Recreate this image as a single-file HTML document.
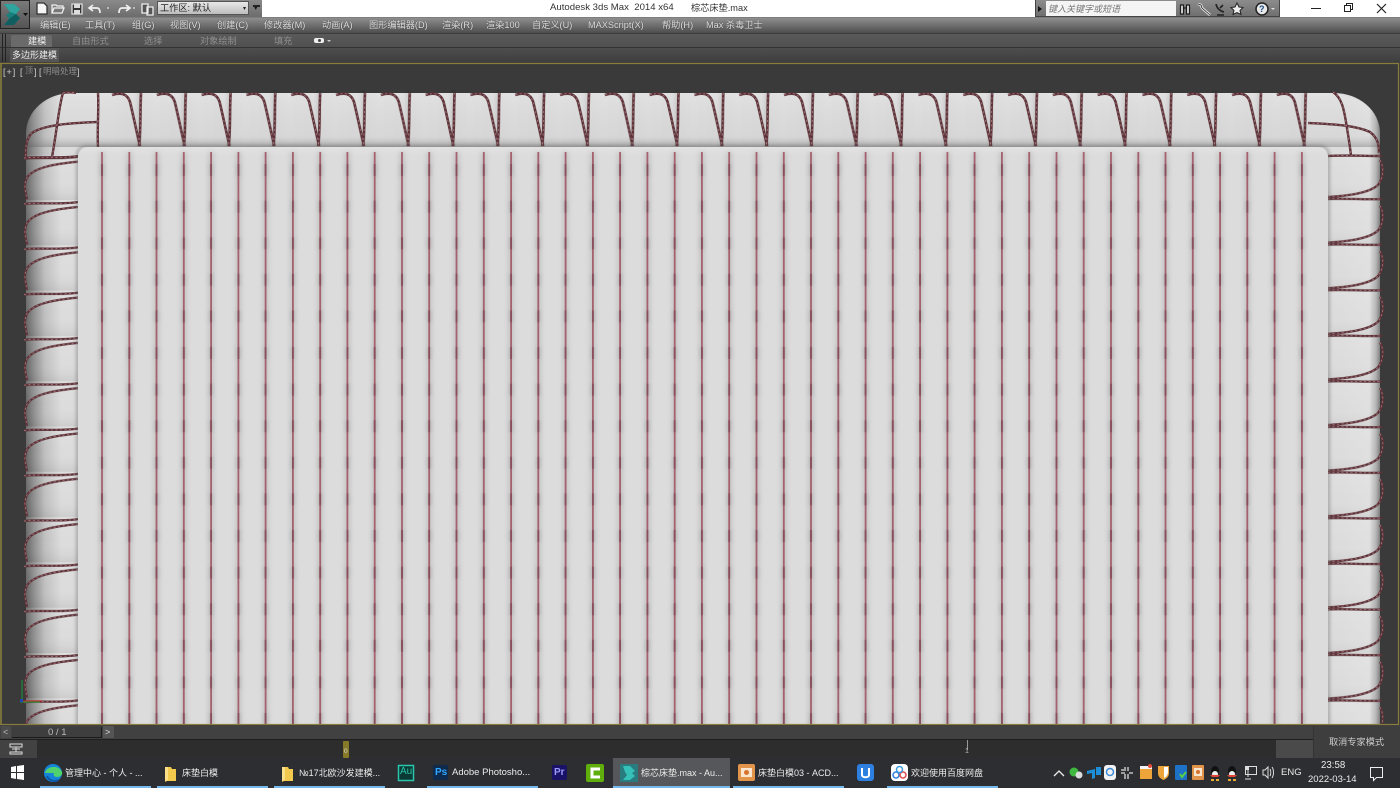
<!DOCTYPE html>
<html><head><meta charset="utf-8"><title>3ds Max</title>
<style>
html,body{margin:0;padding:0;background:#3a3a3a}
#p{position:relative;width:1400px;height:788px;overflow:hidden;background:#3a3a3a;font-family:"Liberation Sans","Noto Sans CJK SC",sans-serif;font-size:10px}
.a{position:absolute}
.t{position:absolute;white-space:pre;line-height:14px}
.m{color:#dedede;top:18px;font-size:9.2px;text-shadow:0 0 1px #333}
.r{color:#8f8f8f;top:34px;font-size:9.2px}
.k{color:#ececec;top:766px;font-size:9px}
.u{position:absolute;top:786px;height:2px;background:#76b9ed}
svg{position:absolute;overflow:visible}
</style></head><body><div id="p">

<!-- title bar -->
<div class="a" style="left:0;top:0;width:1400px;height:18px;background:#fff"></div>
<div class="a" style="left:30px;top:0;width:232px;height:17px;background:linear-gradient(#8a8a8a,#6c6c6c);border-bottom:1px solid #444"></div>
<div class="a" style="left:157px;top:1px;width:92px;height:14px;background:linear-gradient(#e8e8e8,#bdbdbd);border:1px solid #555;box-sizing:border-box"></div>
<span class="t" style="left:160px;top:1px;color:#222;font-size:9.2px">工作区: 默认</span>
<span class="t" style="left:243px;top:2px;color:#222;font-size:6px">▾</span>
<span class="t" style="left:254px;top:2px;color:#111;font-size:7px">▾</span>
<div class="a" style="left:253px;top:5px;width:7px;height:2px;background:#222"></div>
<span class="t" style="left:550px;top:1px;color:#333;font-size:9.6px">Autodesk 3ds Max  2014 x64</span>
<span class="t" style="left:691px;top:1px;color:#333;font-size:9.2px">棕芯床垫.max</span>

<!-- quick access icons -->
<svg style="left:30px;top:0" width="125" height="17" fill="none" stroke="#eee" stroke-width="1.300">
<path d="M7 3h7l3 3v8H7z" fill="#f5f5f5" stroke="#333"/>
<path d="M22 13V5h4l1 1h6v2M22 13l2-5h10l-2 5z" stroke="#eee"/>
<path d="M42 4h10v10H42z" fill="#333" stroke="#ddd"/><path d="M44 4h6v4h-6zM44 10h6v4h-6z" fill="#ddd" stroke="none"/>
<path d="M63 5l-4 3 4 3M59 8h8c2 0 3 2 3 5" stroke-width="1.700"/>
<path d="M77 8h2" stroke="#ddd"/>
<path d="M96 5l4 3-4 3M100 8h-8c-2 0-3 2-3 5" stroke-width="1.700"/>
<path d="M103 8h2" stroke="#ddd"/>
<path d="M112 4h6v9h-6zM117 7h6v8h-6z" stroke="#eee" fill="#555"/>
</svg>
<!-- search -->
<div class="a" style="left:1035px;top:0;width:245px;height:17px;background:linear-gradient(#8c8c8c,#707070);border:1px solid #444;border-top:0;box-sizing:border-box"></div>
<div class="a" style="left:1046px;top:1px;width:130px;height:15px;background:#f4f4f4"></div>
<span class="t" style="left:1048px;top:2px;color:#777;font-size:9px;font-style:italic">键入关键字或短语</span>
<svg style="left:1035px;top:0" width="245" height="17" fill="none" stroke="#1d1d1d" stroke-width="1.500">
<path d="M3 6l4 3-4 3z" fill="#111" stroke="none"/>
<path d="M145.500 5h3v9h-3zM151.500 5h3v9h-3zM148.500 8h3" fill="#ddd" stroke-width="1.200"/>
<path d="M163 4l3 1 1 3 8 7" stroke="#eee" stroke-width="2.500"/><path d="M163 4l3 1 1 3 8 7" stroke-width=".8"/>
<path d="M181 4c1 5 4 7 8 8M185 8l3-3M182 15h7" stroke="#222" stroke-width="1.600"/>
<path d="M202 3l2 4 4 .5-3 3 1 4-4-2-4 2 1-4-3-3 4-.5z" fill="#eee" stroke="#222" stroke-width="1"/>
<circle cx="227" cy="9" r="6" fill="#e8e8e8" stroke="#222"/>
<path d="M236 8h4l-2 2z" fill="#ddd" stroke="none"/>
</svg>
<span class="t" style="left:1259px;top:2px;color:#1b4d86;font-size:9px;font-weight:bold">?</span>
<!-- window controls -->
<svg style="left:1300px;top:0" width="100" height="18" fill="none" stroke="#222" stroke-width="1">
<path d="M11 8.500h10"/>
<path d="M44.500 5.500h6v6h-6zM46.500 5.500v-2h6v6h-2"/>
<path d="M77 4l9 9M86 4l-9 9" stroke-width="1.200"/>
</svg>

<!-- menu bar -->
<div class="a" style="left:0;top:18px;width:1400px;height:15px;background:linear-gradient(#8e8e8e,#4e4e4e)"></div>
<div class="a" style="left:0;top:17px;width:1400px;height:1px;background:#7d7d7d"></div>
<span class="t m" style="left:40px">编辑(E)</span>
<span class="t m" style="left:85px">工具(T)</span>
<span class="t m" style="left:132px">组(G)</span>
<span class="t m" style="left:170px">视图(V)</span>
<span class="t m" style="left:217px">创建(C)</span>
<span class="t m" style="left:264px">修改器(M)</span>
<span class="t m" style="left:322px">动画(A)</span>
<span class="t m" style="left:369px">图形编辑器(D)</span>
<span class="t m" style="left:442px">渲染(R)</span>
<span class="t m" style="left:486px">渲染100</span>
<span class="t m" style="left:532px">自定义(U)</span>
<span class="t m" style="left:588px">MAXScript(X)</span>
<span class="t m" style="left:662px">帮助(H)</span>
<span class="t m" style="left:706px">Max 杀毒卫士</span>

<!-- logo -->
<div class="a" style="left:0;top:0;width:30px;height:29px;background:linear-gradient(#7a7a7a,#555);border:1px solid #222;box-sizing:border-box"></div>
<svg style="left:0;top:0" width="30" height="29">
<path d="M4 4H14L20 9 16 14 20 18 14 25H4L9 19 6 15 10 12Z" fill="#1a7f7c"/>
<path d="M4 4H14L20 9 16 14 10 12Z" fill="#2fa39d"/>
<path d="M4 25H14L20 18 16 14 9 19Z" fill="#105e5f"/>
<path d="M23 13h5l-2.500 3z" fill="#111"/>
</svg>

<!-- ribbon -->
<div class="a" style="left:0;top:33px;width:1400px;height:14px;background:linear-gradient(#5a5a5a,#505050);border-top:1px solid #3c3c3c;box-sizing:border-box"></div>
<div class="a" style="left:0;top:47px;width:1400px;height:16px;background:linear-gradient(#4e4e4e,#3d3d3d);border-top:1px solid #333;box-sizing:border-box"></div>
<div class="a" style="left:2px;top:34px;width:4px;height:28px;border-left:1px solid #222;border-right:1px solid #222;box-sizing:border-box"></div>
<div class="a" style="left:11px;top:35px;width:41px;height:12px;background:#6a6a6a;border-radius:2px 2px 0 0"></div>
<span class="t" style="left:28px;top:34px;color:#eee;font-size:9.2px">建模</span>
<span class="t r" style="left:72px">自由形式</span>
<span class="t r" style="left:144px">选择</span>
<span class="t r" style="left:200px">对象绘制</span>
<span class="t r" style="left:274px">填充</span>
<div class="a" style="left:314px;top:38px;width:10px;height:5px;background:#eee;border-radius:2px"></div>
<div class="a" style="left:318px;top:39px;width:3px;height:3px;background:#444;border-radius:50%"></div>
<div class="a" style="left:327px;top:40px;width:0;height:0;border:2px solid transparent;border-top-color:#ccc"></div>
<div class="a" style="left:10px;top:48px;width:49px;height:14px;background:#555"></div>
<span class="t" style="left:12px;top:48px;color:#eee;font-size:9px">多边形建模</span>

<!-- viewport -->
<svg style="left:0;top:0" width="1400" height="788" viewBox="0 0 1400 788">
<defs>
<clipPath id="vp"><rect x="0" y="64" width="1400" height="660"/></clipPath>
<linearGradient id="outer" x1="26" x2="1380" y1="0" y2="0" gradientUnits="userSpaceOnUse">
<stop offset="0" stop-color="#666"/><stop offset=".006" stop-color="#909090"/><stop offset=".014" stop-color="#c0c0c0"/><stop offset=".026" stop-color="#dcdcdc"/><stop offset=".97" stop-color="#dcdcdc"/><stop offset=".992" stop-color="#e0e0e0"/><stop offset=".997" stop-color="#b4b4b4"/><stop offset="1" stop-color="#7e7e7e"/>
</linearGradient>
<linearGradient id="topv" x1="0" x2="0" y1="93" y2="147" gradientUnits="userSpaceOnUse">
<stop offset="0" stop-color="#fff" stop-opacity=".2"/><stop offset=".12" stop-color="#fff" stop-opacity=".1"/><stop offset=".8" stop-color="#999" stop-opacity=".06"/><stop offset="1" stop-color="#555" stop-opacity=".35"/>
</linearGradient>
<linearGradient id="tp" x1="0" x2="1" y1="0" y2="0">
<stop offset="0" stop-color="#000" stop-opacity="0"/><stop offset=".55" stop-color="#000" stop-opacity=".01"/><stop offset=".68" stop-color="#000" stop-opacity=".1"/><stop offset=".72" stop-color="#000" stop-opacity=".01"/><stop offset="1" stop-color="#000" stop-opacity="0"/>
</linearGradient>
<linearGradient id="sd" x1="0" x2="0" y1="0" y2="1">
<stop offset="0" stop-color="#fff" stop-opacity=".08"/><stop offset=".5" stop-color="#fff" stop-opacity="0"/><stop offset="1" stop-color="#000" stop-opacity=".07"/>
</linearGradient>
<linearGradient id="panelTop" x1="0" x2="0" y1="147" y2="156" gradientUnits="userSpaceOnUse">
<stop offset="0" stop-color="#e8e8e8" stop-opacity=".5"/><stop offset="1" stop-color="#e8e8e8" stop-opacity="0"/>
</linearGradient>
<pattern id="tb" patternUnits="userSpaceOnUse" x="110" y="90" width="44.8" height="58">
<rect width="44.8" height="58" fill="url(#tp)"/>
<g fill="none">
<path d="M2 5C10 2.500 17 3 20 12 23 24 27 44 30 56" stroke="#5c3238" stroke-width="2.600"/>
<path d="M31 3C30 20 31 40 29 56" stroke="#5c3238" stroke-width="2.600"/>
<path d="M2 5C10 2.500 17 3 20 12 23 24 27 44 30 56" stroke="#a87c82" stroke-width=".8" stroke-dasharray="2 2.500"/>
<path d="M31 3C30 20 31 40 29 56" stroke="#a87c82" stroke-width=".8" stroke-dasharray="2 2.500"/>
</g>
</pattern>
<pattern id="lf" patternUnits="userSpaceOnUse" x="20" y="154.700" width="60" height="45.300">
<rect x="6" y="0" width="52" height="45.300" fill="url(#sd)"/>
<g fill="none">
<path d="M4 4C20 2 40 5 58 2" stroke="#5c3238" stroke-width="2.300"/>
<path d="M58 7C38 9 14 12 7 23 3 31 6 38 7 45" stroke="#5c3238" stroke-width="2.200"/>
<path d="M4 4C20 2 40 5 58 2" stroke="#a87c82" stroke-width=".8" stroke-dasharray="2 2.500"/>
<path d="M58 7C38 9 14 12 7 23 3 31 6 38 7 45" stroke="#a87c82" stroke-width=".8" stroke-dasharray="2 2.500"/>
</g>
</pattern>
<pattern id="rt" patternUnits="userSpaceOnUse" x="1326" y="155" width="60" height="45.600">
<rect x="2" y="0" width="52" height="45.600" fill="url(#sd)"/>
<g fill="none">
<path d="M54 5C58 12 58 22 52 30 42 39 18 41 2 42" stroke="#5c3238" stroke-width="2.300"/>
<path d="M2 44C20 43 38 45 56 44" stroke="#5c3238" stroke-width="2.200"/>
<path d="M54 5C58 12 58 22 52 30 42 39 18 41 2 42" stroke="#a87c82" stroke-width=".8" stroke-dasharray="2 2.500"/>
<path d="M2 44C20 43 38 45 56 44" stroke="#a87c82" stroke-width=".8" stroke-dasharray="2 2.500"/>
</g>
</pattern>
<filter id="bl"><feGaussianBlur stdDeviation="1.800"/></filter>
<filter id="bl2"><feGaussianBlur stdDeviation="2.500"/></filter>
<path id="vlines" fill="none" d="M102 152V726M129.300 152V726M156.500 152V726M183.800 152V726M211.100 152V726M238.400 152V726M265.600 152V726M292.900 152V726M320.200 152V726M347.400 152V726M374.700 152V726M402 152V726M429.200 152V726M456.500 152V726M483.800 152V726M511.100 152V726M538.300 152V726M565.600 152V726M592.900 152V726M620.100 152V726M647.400 152V726M674.700 152V726M701.900 152V726M729.200 152V726M756.500 152V726M783.800 152V726M811 152V726M838.300 152V726M865.600 152V726M892.800 152V726M920.100 152V726M947.400 152V726M974.600 152V726M1001.900 152V726M1029.200 152V726M1056.500 152V726M1083.700 152V726M1111 152V726M1138.300 152V726M1165.500 152V726M1192.800 152V726M1220.100 152V726M1247.300 152V726M1274.600 152V726M1301.900 152V726"/>
<g id="ropes" fill="none">
<path d="M98 93C99 110 97 130 98 147"/>
<path d="M63 93C59 105 57 130 52 157"/>
<path d="M63 93C68 92 72 92 76 93"/>
<path d="M98 122C75 123 45 124 32 133 26 138 25 150 26 158"/>
<path d="M1308 123C1330 124 1355 125 1370 132 1378 138 1379 145 1379 153"/>
<path d="M1333 92C1342 98 1344 110 1346 122 1348 135 1350 145 1351 156"/>
<path d="M1328 156C1345 155 1365 156 1382 156"/>
<path d="M24 158C40 156 60 159 78 156"/>
</g>
</defs>
<g clip-path="url(#vp)">
<rect x="0" y="64" width="1400" height="660" fill="#3a3a3a"/>
<rect x="26" y="93" width="1354" height="720" rx="46" ry="40" fill="url(#outer)"/>
<path d="M26 147V135Q30 100 72 93H1334Q1376 100 1380 135V147Z" fill="url(#topv)"/>
<rect x="110" y="90" width="1200" height="58" fill="url(#tb)"/>
<rect x="20" y="154.700" width="60" height="570" fill="url(#lf)"/>
<rect x="1326" y="155" width="60" height="570" fill="url(#rt)"/>
<use href="#ropes" stroke="#5c3238" stroke-width="2.400"/>
<use href="#ropes" stroke="#a87c82" stroke-width=".8" stroke-dasharray="2 2.500"/>
<rect x="76" y="145" width="1254" height="590" rx="10" fill="#5e5e5e" opacity=".4" filter="url(#bl)"/>
<rect x="78" y="147" width="1250" height="590" rx="10" fill="#dcdcdc"/>
<rect x="78" y="147" width="1250" height="12" rx="7" fill="url(#panelTop)"/>
<use href="#vlines" stroke="#adadad" stroke-width="6" opacity=".5" filter="url(#bl2)"/>
<use href="#vlines" stroke="#808080" stroke-width="5" opacity=".2" stroke-dasharray="12 24.600" stroke-dashoffset="-12" filter="url(#bl)"/>
<use href="#vlines" stroke="#a5616f" stroke-width="1.800"/>
<use href="#vlines" stroke="#8a4f5c" stroke-width="1.800" stroke-dasharray="12 24.600" stroke-dashoffset="-12"/>
<path d="M20 702H40M22 680V702" stroke="#1a9a3a" stroke-width="1" fill="none"/>
<path d="M20 701H42" stroke="#cc2222" stroke-width="1"/>
<rect x="20" y="699" width="3" height="3" fill="#2244bb"/>
</g>
<rect x="0.500" y="63.500" width="1398" height="661" fill="none" stroke="#8a7d3a" stroke-width="1.200"/>
<rect x="0" y="64" width="2" height="660" fill="#77703a"/>
</svg>
<span class="t" style="left:3px;top:65px;color:#cfcfcf;font-size:9px;letter-spacing:1px">[+]</span>
<span class="t" style="left:20px;top:65px;color:#cfcfcf;font-size:9px">[</span>
<span class="t" style="left:25px;top:64px;color:#8a8a8a;font-size:8px">顶</span>
<span class="t" style="left:34px;top:65px;color:#cfcfcf;font-size:9px">]</span>
<span class="t" style="left:39px;top:65px;color:#cfcfcf;font-size:9px">[</span>
<span class="t" style="left:43px;top:64px;color:#8a8a8a;font-size:8.500px">明暗处理</span>
<span class="t" style="left:77px;top:65px;color:#cfcfcf;font-size:9px">]</span>

<!-- time slider -->
<div class="a" style="left:0;top:725px;width:1400px;height:15px;background:#414141;border-bottom:1px solid #1f1f1f;box-sizing:border-box"></div>
<div class="a" style="left:1px;top:726px;width:10px;height:12px;background:#4c4c4c"></div>
<div class="a" style="left:12px;top:727px;width:90px;height:11px;background:#3e3e3e;border-bottom:1px solid #1a1a1a;border-right:1px solid #1a1a1a;box-sizing:border-box"></div>
<div class="a" style="left:103px;top:726px;width:11px;height:12px;background:#555"></div>
<span class="t" style="left:3px;top:725px;color:#bbb;font-size:9px">&lt;</span>
<span class="t" style="left:105px;top:725px;color:#ddd;font-size:9px">&gt;</span>
<span class="t" style="left:48px;top:726px;color:#bbb;font-size:9.500px">0 / 1</span>

<!-- track bar -->
<div class="a" style="left:0;top:740px;width:1400px;height:18px;background:#2d2d2d"></div>
<div class="a" style="left:0;top:740px;width:37px;height:18px;background:#424242"></div>
<div class="a" style="left:1276px;top:740px;width:37px;height:18px;background:#4a4a4a"></div>
<svg style="left:0;top:740px" width="37" height="18" fill="none" stroke="#ddd" stroke-width="1">
<path d="M10 4h12v3H10zM12 9h8M16 7v5M10 12h12v2H10z"/>
</svg>
<div class="a" style="left:343px;top:741px;width:6px;height:17px;background:#867a28;border-radius:1px"></div>
<span class="t" style="left:344px;top:747px;color:#ddd;font-size:6.500px;line-height:10px">0</span>
<div class="a" style="left:967px;top:740px;width:1px;height:10px;background:#999"></div>
<span class="t" style="left:965px;top:747px;color:#bbb;font-size:7px;line-height:10px">1</span>
<div class="a" style="left:1313px;top:726px;width:87px;height:33px;background:#3e3e3e;border-left:1px solid #333;box-sizing:border-box"></div>
<span class="t" style="left:1329px;top:735px;color:#ccc;font-size:9.200px">取消专家模式</span>

<!-- taskbar -->
<div class="a" style="left:0;top:758px;width:1400px;height:30px;background:#2c2e32"></div>
<div class="a" style="left:613px;top:758px;width:117px;height:30px;background:#55575a"></div>
<div class="u" style="left:40px;width:111px"></div>
<div class="u" style="left:157px;width:111px"></div>
<div class="u" style="left:274px;width:111px"></div>
<div class="u" style="left:427px;width:111px"></div>
<div class="u" style="left:613px;width:117px"></div>
<div class="u" style="left:733px;width:111px"></div>
<div class="u" style="left:887px;width:111px"></div>

<svg style="left:0;top:758px" width="1400" height="30">
<path d="M11 9l5-1v6h-5zM17 8l7-1v7h-7zM11 15h5v6l-5-1zM17 15h7v7l-7-1z" fill="#fff"/>
<circle cx="53" cy="15" r="9" fill="#1683d8"/><path d="M45 15c1-7 14-9 17-1 1 3-2 5-5 5-3 0-4-2-3-4-3 0-6 0-9 0z" fill="#4fd26e"/><path d="M47 18c2 5 8 6 11 4" stroke="#0c5aa8" stroke-width="2" fill="none"/>
<path d="M165 9h6l1 2 4 0v12h-9l-2 1z" fill="#f2c94c"/><path d="M165 9v14l3-1V9z" fill="#fbe08a"/>
<path d="M282 9h6l1 2 4 0v12h-9l-2 1z" fill="#f2c94c"/><path d="M282 9v14l3-1V9z" fill="#fbe08a"/>
<rect x="398.500" y="7.500" width="15" height="15" fill="#0a3a33" stroke="#2bc5ad" stroke-width="1.500"/>
<rect x="433" y="7" width="15" height="15" rx="2" fill="#0e2a4d"/>
<rect x="552" y="7" width="15" height="15" rx="2" fill="#1a1266"/>
<rect x="586" y="6" width="18" height="18" rx="2" fill="#5fae0c"/><path d="M600 11h-8v8h8" stroke="#fff" stroke-width="3" fill="none"/>
<rect x="620" y="6" width="18" height="18" fill="#2a7b80"/><path d="M623 8h7l5 5-3 2 3 3-5 4h-7l4-5-2-3z" fill="#35c1b8"/>
<rect x="738" y="6" width="17" height="17" rx="2" fill="#e2944b"/><rect x="741" y="10" width="11" height="9" fill="#f8e6d0"/><circle cx="746.500" cy="14.500" r="2.500" fill="#d9722a"/>
<rect x="857" y="6" width="17" height="17" rx="3" fill="#2d7fe0"/><path d="M862 10v7c0 3 7 3 7 0v-7" stroke="#fff" stroke-width="2" fill="none"/>
<rect x="891" y="6" width="17" height="17" rx="4" fill="#fff"/><circle cx="896" cy="17" r="3" fill="none" stroke="#2d7fe0" stroke-width="1.500"/><circle cx="903" cy="17" r="3" fill="none" stroke="#e04a4a" stroke-width="1.500"/><circle cx="899.500" cy="11.500" r="3" fill="none" stroke="#3b9be0" stroke-width="1.500"/>
<path d="M1054 18l5-5 5 5" stroke="#eee" stroke-width="1.300" fill="none"/>
<circle cx="1074" cy="14" r="4.500" fill="#3fb83f"/><circle cx="1079" cy="17" r="3.500" fill="#ddd"/>
<path d="M1087 13l8-2 0 9-3 1v-6l-5 1zM1096 9h5v8h-5z" fill="#1d8fd8"/>
<rect x="1104" y="7" width="12" height="15" rx="3" fill="#f2f2f2"/><circle cx="1110" cy="14" r="3.500" fill="none" stroke="#3b8bd8" stroke-width="1.500"/>
<path d="M1125 9v4M1128 9v4M1121 15h4M1121 12h3M1129 15h4M1125 16v5M1128 16v5" stroke="#ddd" stroke-width="1.300" fill="none"/>
<rect x="1140" y="10" width="12" height="11" fill="#eda53a"/><rect x="1140" y="8" width="12" height="3" fill="#f4f4f4"/><circle cx="1150" cy="8" r="2" fill="#e04a3a"/>
<path d="M1158 8h11v7c0 4-3 6-5.500 7-2.500-1-5.500-3-5.500-7z" fill="#eda53a"/><path d="M1164 9v11c2-1 4-3 4-6v-5z" fill="#fff"/>
<rect x="1175" y="7" width="12" height="15" rx="1" fill="#1d72c8"/><path d="M1180 16l2 3 4-5" stroke="#55d04a" stroke-width="2" fill="none"/>
<rect x="1192" y="7" width="12" height="15" rx="1" fill="#e2944b"/><rect x="1194" y="10" width="8" height="8" fill="#f8e6d0"/><circle cx="1198" cy="14" r="2" fill="#d9722a"/>
<ellipse cx="1215" cy="13" rx="4" ry="5" fill="#111"/><ellipse cx="1215" cy="16" rx="3" ry="3" fill="#eee"/><path d="M1210 17h10l-2 2h-6z" fill="#d43"/><path d="M1211 22h3M1216 22h3" stroke="#ea3" stroke-width="2"/>
<ellipse cx="1232" cy="13" rx="4" ry="5" fill="#111"/><ellipse cx="1232" cy="16" rx="3" ry="3" fill="#eee"/><path d="M1227 17h10l-2 2h-6z" fill="#d43"/><path d="M1228 22h3M1233 22h3" stroke="#ea3" stroke-width="2"/>
<path d="M1245.500 8.500h11v8h-11zM1248 8v11M1245 21h6" stroke="#ddd" fill="none"/><rect x="1245" y="8" width="4" height="4" fill="#ddd"/>
<path d="M1263 12h2l3-3v11l-3-3h-2zM1270 11c1 2 1 5 0 7M1272 9c2 3 2 8 0 11" stroke="#ddd" fill="none"/>
<path d="M1370.500 9.500h12v10h-6l-3 3v-3h-3z" stroke="#eee" stroke-width="1" fill="none"/>
</svg>
<span class="t k" style="left:400px;top:765px;color:#2bc5ad;font-size:10px">Au</span>
<span class="t k" style="left:435px;top:766px;color:#31a8ff;font-size:10px;font-weight:bold">Ps</span>
<span class="t k" style="left:554px;top:766px;color:#9a9aff;font-size:10px;font-weight:bold">Pr</span>
<span class="t k" style="left:65px">管理中心 - 个人 - ...</span>
<span class="t k" style="left:182px">床垫白模</span>
<span class="t k" style="left:299px">№17北欧沙发建模...</span>
<span class="t k" style="left:452px;font-size:9.500px">Adobe Photosho...</span>
<span class="t k" style="left:641px">棕芯床垫.max - Au...</span>
<span class="t k" style="left:758px">床垫白模03 - ACD...</span>
<span class="t k" style="left:911px">欢迎使用百度网盘</span>
<span class="t k" style="left:1281px;font-size:9.500px">ENG</span>
<span class="t k" style="left:1321px;top:759px;font-size:9.700px">23:58</span>
<span class="t k" style="left:1308px;top:773px;font-size:9.500px">2022-03-14</span>
</div></body></html>
